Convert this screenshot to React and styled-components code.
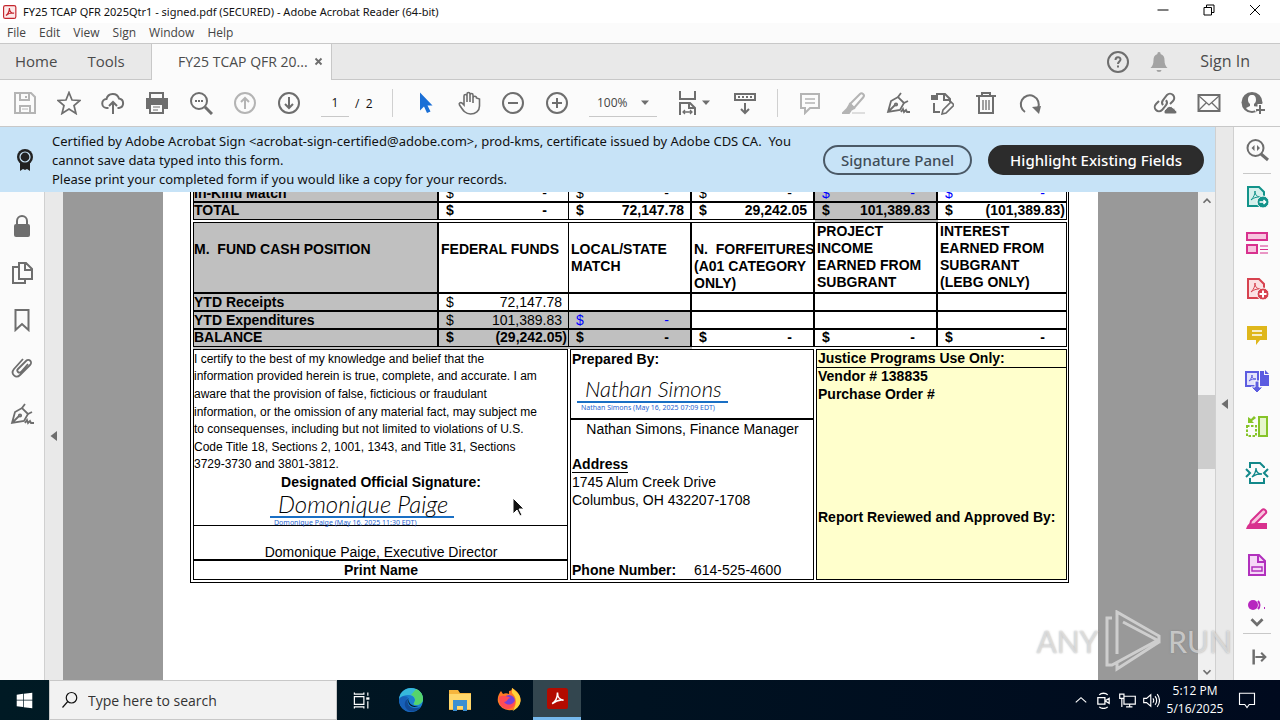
import React from 'react';
import styled, { createGlobalStyle } from 'styled-components';

const icons = {
  save: (
    <g stroke="#b4b4b4">
      <path d="M2 2h16l4 4v16H2z" />
      <path d="M7 3v6h9V3M7 21v-6h10v6M13 5v2" />
      <path d="M9 18h6" strokeWidth="1" />
    </g>
  ),
  star: <path d="M12 1.500l3 7.500 8 .500-6 5 2 8-7-4.500-7 4.500 2-8-6-5 8-.500z" strokeWidth="1.700" />,
  cloud: (
    <path d="M7.500 17H6a4.500 4.500 0 0 1-.5-9 6.500 6.500 0 0 1 12.500-.500A4.800 4.800 0 0 1 18 17h-1.500M12 23V11m-4 4l4-4 4 4" />
  ),
  print: (
    <g>
      <path d="M5 7V2h13v5" />
      <path d="M1 7h22v11h-4v-4H5v4H1z" fill="#6e6e6e" stroke="none" />
      <path d="M5 13h13v9H5z" fill="#fbfbfb" />
      <path d="M8 16h7M8 19h5" strokeWidth="1" />
    </g>
  ),
  find: (
    <g>
      <circle cx="10" cy="10" r="8" />
      <path d="M16 16l7 7" strokeWidth="3" />
      <path d="M6 10h2m1 0h2m1 0h2" />
    </g>
  ),
  up: (
    <g stroke="#b4b4b4">
      <circle cx="12" cy="12" r="10" />
      <path d="M12 18V7m-4 4l4-4 4 4" />
    </g>
  ),
  down: (
    <g>
      <circle cx="12" cy="12" r="10" />
      <path d="M12 6v11m-4-4l4 4 4-4" />
    </g>
  ),
  pointer: <path d="M7 1.500v18l4-4 3 6.500 3.500-1.500-3-6h5z" fill="#1a6fd6" stroke="none" />,
  hand: (
    <path
      d="M7 14V5a1.500 1.500 0 0 1 3 0v6V3a1.500 1.500 0 0 1 3 0v8V4a1.500 1.500 0 0 1 3 0v8V7a1.500 1.500 0 0 1 3.500 0l3 1v7c0 5-4 8-9 8s-7-3-11-9c-1-2 1-3 2.500-2z"
      strokeWidth="1.6"
    />
  ),
  minus: (
    <g>
      <circle cx="12" cy="12" r="10" />
      <path d="M7 12h10" />
    </g>
  ),
  plus: (
    <g>
      <circle cx="12" cy="12" r="10" />
      <path d="M7 12h10M12 7v10" />
    </g>
  ),
  fit: (
    <g>
      <path d="M4 0v8h15V0M4 24V12h10l5 5v7M13 12v5h6" />
      <path d="M7 21h9m-7-2l-2 2 2 2m5-4l2 2-2 2" strokeWidth="1.3" />
    </g>
  ),
  keyboard: (
    <g>
      <path d="M2 3h20v6H2z" />
      <path d="M5 6h2m2 0h2m2 0h2m2 0h2M12 12v10m-4-4l4 4 4-4" />
    </g>
  ),
  comment: (
    <g stroke="#b4b4b4">
      <path d="M3 3h18v14h-9l-5 5v-5H3z" />
      <path d="M7 8h10M7 12h10" strokeWidth="1.500" />
    </g>
  ),
  marker: (
    <g stroke="#b4b4b4">
      <path d="M8 13L18 3c2-2 5 1 3.500 3L12 17z" />
      <path d="M8 13l4 4-3 2-4-1zM5 18l-4 4h6l2-3z" fill="#b4b4b4" />
      <path d="M10 22h13" stroke="#dedede" />
    </g>
  ),
  pen: (
    <g strokeWidth="1.800">
      <path d="M2 21l3-11 7-4 6 6-4 7zM2 21l7-7" />
      <circle cx="10" cy="13.500" r="1.200" />
      <path d="M12 6l3-4m3 10l4-2M15 21l2-3 1 3 2-2 1 2h3" />
    </g>
  ),
  editPage: (
    <g>
      <path d="M6 3h9l5 5v3M14 3v6h6M4 12v9h6" />
      <path d="M1 4h7v5H1z" fill="#6e6e6e" stroke="none" />
      <path d="M12 23l1-4 8-8 3 3-8 8z" strokeWidth="1.600" />
    </g>
  ),
  trash: (
    <g>
      <path d="M2 5h20M8 5V2h8v3M5 6v16h14V6" />
      <path d="M9 9v10M12 9v10M15 9v10" strokeWidth="1.300" />
    </g>
  ),
  rotate: (
    <g>
      <path d="M7 21A9 9 0 1 1 20 17" />
      <path d="M14 16l9-1-2 8z" fill="#6e6e6e" stroke="none" />
    </g>
  ),
  link: (
    <g>
      <path d="M10 14a4 4 0 0 1 0-5l4-5a4 4 0 0 1 6 6l-3 3M13 9a4 4 0 0 1 0 5l-4 5a4 4 0 0 1-6-6l3-3" />
      <path
        d="M12 23a3 3 0 0 1 1-5 4 4 0 0 1 7-1c2 0 2 2 2 2 3 1 2 4 0 4z"
        fill="#6e6e6e"
        stroke="#fbfbfb"
        strokeWidth="1"
      />
    </g>
  ),
  mail: (
    <g>
      <path d="M1.500 4h21v16h-21z" />
      <path d="M2 5l10 9L22 5M2 19l7-7m13 7l-7-7" strokeWidth="1.300" />
    </g>
  ),
  person: (
    <g>
      <circle cx="11" cy="11.500" r="10.500" fill="#6e6e6e" stroke="none" />
      <path
        d="M11 4c-3 0-4 2-4 5 0 2 1 3 2 4v2l-4 2c1 2 4 3 6 3s5-1 6-3l-4-2v-2c1-1 2-2 2-4 0-3-1-5-4-5z"
        fill="#fbfbfb"
        stroke="none"
      />
      <path d="M19 13v10m-5-5h10" stroke="#fbfbfb" strokeWidth="5" />
      <path d="M19 14v9m-4-4h9" />
    </g>
  ),
  help: (
    <g>
      <circle cx="12" cy="12" r="10" />
      <path d="M9.500 10c0-3.500 5-3.500 5-.500 0 2-2.500 2-2.500 4.500M12 15.500v2" />
    </g>
  ),
  bell: (
    <path
      d="M12 2a1.500 1.500 0 0 1 1.500 2c3 1 4 3 4 6 0 4 1 6 3 8H3.500c2-2 3-4 3-8 0-3 1-5 4-6A1.500 1.500 0 0 1 12 2zM9.500 20h5a2.500 2 0 0 1-5 0z"
      fill="#a3a3a3"
      stroke="none"
    />
  ),
  medal: (
    <g>
      <path d="M7 14h10v9l-3-2-2 1-2-1-3 2z" fill="#222" stroke="none" />
      <circle cx="12" cy="9" r="8" fill="#222" stroke="none" />
      <circle cx="12" cy="9" r="5" stroke="#c7e3f7" strokeWidth="1.200" />
    </g>
  ),
  lock: (
    <g>
      <rect x="4" y="10" width="16" height="13" rx="2" fill="#6e6e6e" stroke="none" />
      <path d="M7 11V7a5 5 0 0 1 10 0v4" />
    </g>
  ),
  pages: <path d="M9 2h7l6 6v10H9zM15 2v7h7M9 6H3v16h12v-4" />,
  bookmark: <path d="M5.500 2h13v20L12 16l-6.500 6z" />,
  clip: (
    <path
      d="M18 9l-7 8c-2 2-5-1-3-3l8-8c3-3 7 1 4 4L10 20c-4 4-10-1-6-6l9-10"
      strokeWidth="1.800"
    />
  ),
  toolSearch: (
    <g>
      <circle cx="10.500" cy="10" r="8" />
      <path d="M16 16l7 6" strokeWidth="3" />
      <path d="M9.500 7v6l-3-3zM12 7v6l3-3z" fill="#6e6e6e" stroke="none" />
    </g>
  ),
  exportPdf: (
    <g stroke="#12938a">
      <path d="M3 2h11l5 5v14H3z" fill="#d5f0ec" />
      <path d="M6 15c3-3 4-6 4-9 0 5 3 6 6 6-4 0-6 0-10 3z" strokeWidth="1" />
      <circle cx="18" cy="17" r="6" fill="#12938a" stroke="#fbfbfb" strokeWidth="1" />
      <path d="M14.500 17h6m-2-2l2 2-2 2" stroke="#fff" strokeWidth="1.500" />
    </g>
  ),
  organize: (
    <g stroke="#d8318e">
      <path d="M2 2h20v7H2zM2 14h10v8H2z" fill="#f8c5df" />
      <path d="M15 15h8M15 18.500h8M15 22h8" strokeWidth="1" />
    </g>
  ),
  createPdf: (
    <g stroke="#d7424f">
      <path d="M3 2h11l5 5v14H3z" fill="#fbe1e3" />
      <path d="M6 15c3-3 4-6 4-9 0 5 3 6 6 6-4 0-6 0-10 3z" strokeWidth="1" />
      <circle cx="18" cy="17" r="6" fill="#d7424f" stroke="#fbfbfb" strokeWidth="1" />
      <path d="M14.500 17h7M18 13.500v7" stroke="#fff" />
    </g>
  ),
  note: (
    <g>
      <path d="M2 3h20v14h-7l-4 5v-5H2z" fill="#dfb71b" stroke="none" />
      <path d="M7 8h10M7 12h10" stroke="#fff" strokeWidth="1.500" />
    </g>
  ),
  combine: (
    <g stroke="#5c5ce0">
      <path d="M1 3h12v14H1z" fill="#e3e3fb" />
      <path d="M4 12c2-2 3-4 3-6 0 4 2 4 4 4-3 0-4 0-7 2z" strokeWidth="1" />
      <path d="M15 2h4v4h5v11h-9zM20 1l4 4h-4z" fill="#5c5ce0" stroke="none" />
      <path d="M10 12h4v6h4l-6 6-6-6h4z" fill="#5c5ce0" stroke="#fbfbfb" strokeWidth="1" />
    </g>
  ),
  compare: (
    <g stroke="#86c429">
      <path d="M14 2h8v19h-8z" fill="#e6f5cd" />
      <path d="M2 11h9v10H2z" strokeDasharray="2.500 1.500" />
      <path d="M3 2v6h6L7 6l4-3-2-2-3 3z" fill="#86c429" stroke="none" />
    </g>
  ),
  compress: (
    <g stroke="#12888a">
      <path d="M5 7V2h10l4 4v1M5 17v5h14v-5M1 8l4 4-4 4M23 8l-4 4 4 4" />
      <path d="M7 16c3-3 4-6 4-9 0 5 3 6 6 6-4 0-6 0-10 3z" strokeWidth="1.300" />
    </g>
  ),
  redact: (
    <g stroke="#d8318e">
      <path d="M1 22c2-6 4-6 7-6h14v6z" fill="#d8318e" stroke="none" />
      <path d="M6 14L17 3c2-2 5 1 4 3L10 17l-5 1z" fill="#f8c5df" />
    </g>
  ),
  form: (
    <g stroke="#b130bd">
      <path d="M4 2h10l6 6v14H4z" fill="#f5d8f7" />
      <path d="M13 2v7h7" />
      <path d="M7 14h10v4H7z" strokeWidth="1.500" />
    </g>
  ),
  protect: (
    <g>
      <circle cx="8" cy="6" r="5" fill="#b726bf" stroke="none" />
      <path d="M13 2a6 6 0 0 1 0 8M19 9h1" stroke="#b726bf" />
    </g>
  ),
  chevronDown: <path d="M6 9l6 6 6-6" strokeWidth="3" />,
  chevronUp: <path d="M6 15l6-6 6 6" strokeWidth="3" />,
  collapse: (
    <g>
      <path d="M8 3v18" strokeWidth="3" />
      <path d="M10 12h11m-4-5l5 5-5 5" strokeWidth="2.500" />
    </g>
  ),
  caret: <path d="M4 7h16l-8 9z" fill="#6e6e6e" stroke="none" />,
  triangleLeft: <path d="M18 2v20L5 12z" fill="#6e6e6e" stroke="none" />,
  cross: <path d="M4 4l16 16M20 4L4 20" strokeWidth="5" />,
  minimise: <path d="M1 12h22" stroke="#000" />,
  restore: <path d="M2 7h15v15H2zM7 7V2h15v15h-5" stroke="#000" />,
  close: <path d="M2 2l20 20M22 2L2 22" stroke="#000" />,
  acrobat: (
    <g>
      <rect x="1" y="1" width="21" height="22" rx="3" fill="#fdeaea" stroke="#c4262e" strokeWidth="2" />
      <path d="M5 18c4-3 6-8 6-13 0 7 4 9 8 9-5-1-9 0-14 4z" stroke="#c4262e" />
    </g>
  ),
  acrobatTile: (
    <g>
      <rect width="24" height="24" rx="3" fill="#b30b00" stroke="none" />
      <path d="M6 18c4-3 6-8 6-13 0 6 2 8 7 9-5-1-8 0-13 4z" stroke="#fff" strokeWidth="1.800" />
    </g>
  ),
  windows: (
    <path d="M1 4l9-1.500V11H1zM11 2.300L23 1v10H11zM1 12h9v9L1 20zM11 12h12v11l-12-1.500z" fill="#fff" stroke="none" />
  ),
  glass: (
    <g stroke="#111" strokeWidth="1.600">
      <circle cx="14" cy="9" r="7" />
      <path d="M9 14l-7 8" />
    </g>
  ),
  taskView: (
    <g stroke="#fff" strokeWidth="1.500">
      <path d="M3 7h12v10H3zM3 2v2h12V2M3 22v-2h12v2M20 2v4M20 13v9" />
      <path d="M18 8h4v3h-4z" fill="#fff" stroke="none" />
    </g>
  ),
  edge: (
    <g stroke="none">
      <circle cx="12" cy="12" r="12" fill="#1b7fd0" />
      <path d="M0 11C1 4 6 0 12 0c8 0 12 6 12 11 0 4-4 6-7 6-2 0-3-1-2-2 3-4-1-8-5-8-5 0-9 2-10 4z" fill="#36b8dc" />
      <path d="M17 1c5 2 7 6 7 10 0 4-4 6-7 6-2 0-3-1-2-2 2-3 1-7-3-8z" fill="#55d46c" />
      <path d="M9 9c-5 5-1 13 6 15C7 25 1 20 0 13c0-4 5-6 9-4z" fill="#1760b8" />
      <path d="M10 10c-4 5 1 13 12 9-4 6-14 6-16-1-1-4 1-7 4-8z" fill="#124a96" />
      <path d="M10 11c-1 4 3 8 9 7-5 3-12-2-9-7z" fill="#001822" />
    </g>
  ),
  folder: (
    <g stroke="none">
      <path d="M1 2h9l2 3h11v17H1z" fill="#f6b53d" />
      <path d="M1 6h22v15H1z" fill="#ffd76b" />
      <path d="M5 12h14v11h-4v-5H9v5H5z" fill="#3b8fd0" />
    </g>
  ),
  firefox: (
    <g stroke="none">
      <path d="M12 3c2 0 3-1 3-3 5 3 9 7 8.500 13A11.500 11 0 0 1 1 14C0 9 2 6 4 3l2 3c2-1 4-1 6 0z" fill="#ff7a25" />
      <path d="M15 0c5 4 9 7 8.500 13-.500 5-4 8-8 10 5-7 4-14-.500-18z" fill="#ffd43a" />
      <circle cx="12" cy="13" r="6" fill="#7542d8" />
      <path d="M2 9c5-3 9 0 12 1-4 0-3 4-7 4 4 5 10 2 11-2 2 9-11 13-15 4z" fill="#ff4b55" />
    </g>
  ),
  trayUp: <path d="M3 16l9-8 9 8" stroke="#fff" />,
  camera: (
    <g stroke="#fff" strokeWidth="1.800">
      <path d="M4 8h10v9H4zM15 12l5-3v7l-5-3M6 4c3-3 9-3 12 0M6 21c3 3 9 3 12 0" />
    </g>
  ),
  network: <path d="M7 6h16v11H7zM15 17v4M10 21h9M1 3h6v6H1zM4 9v12" stroke="#fff" strokeWidth="1.700" />,
  volume: (
    <path
      d="M1 9h4l6-5v16l-6-5H1zM14 9a5 5 0 0 1 0 6M17 6a9 9 0 0 1 0 12M20 3a14 14 0 0 1 0 18"
      stroke="#fff"
      strokeWidth="1.600"
    />
  ),
  notice: <path d="M2 3h20v15h-7l-3 4-3-4H2z" stroke="#fff" strokeWidth="1.500" />,
};

const Icon = ({ name, size = 24 }) => (
  <svg
    width={size}
    height={size}
    viewBox="0 0 24 24"
    fill="none"
    stroke="#6e6e6e"
    strokeWidth="2"
    aria-hidden="true"
  >
    {icons[name]}
  </svg>
);

const menuItems = ['File', 'Edit', 'View', 'Sign', 'Window', 'Help'];
const fileTools = ['save', 'star', 'cloud', 'print', 'find', 'up', 'down'];
const viewTools = ['pointer', 'hand', 'minus', 'plus'];
const markTools = ['comment', 'marker', 'pen', 'editPage', 'trash', 'rotate'];
const shareTools = ['link', 'mail', 'person'];
const leftTools = ['lock', 'pages', 'bookmark', 'clip', 'pen'];
const rightTools = [
  'exportPdf',
  'organize',
  'createPdf',
  'note',
  'combine',
  'compare',
  'compress',
  'redact',
  'form',
];
const taskApps = ['edge', 'folder', 'firefox'];

const certifyLines = [
  'I certify to the best of my knowledge and belief that the',
  'information provided herein is true, complete, and accurate. I am',
  'aware that the provision of false, ficticious or fraudulant',
  'information, or the omission of any material fact, may subject me',
  'to consequenses, including but not limited to violations of U.S.',
  'Code Title 18, Sections 2, 1001, 1343, and Title 31, Sections',
  '3729-3730 and 3801-3812.',
];

const amountInset = (value) => {
  if (value === '-') return 21;
  return value.startsWith('(') ? 1 : 6;
};

const Amount = ({ value, blue }) => (
  <AmountRow $inset={amountInset(value)} $blue={blue}>
    <span>$</span>
    <span>{value}</span>
  </AmountRow>
);

const FundTable = () => (
  <Funds>
    <colgroup>
      <Col $width={246} />
      <Col $width={130} />
      <Col $width={123} />
      <Col $width={123} />
      <Col $width={123} />
      <Col $width={129} />
    </colgroup>
    <tbody>
      <tr>
        <RowHead>In-Kind Match</RowHead>
        <Cell $thin><Amount value='-' /></Cell>
        <Cell><Amount value='-' /></Cell>
        <Cell><Amount value='-' /></Cell>
        <Cell $gray><Amount value='-' blue /></Cell>
        <Cell $thin><Amount value='-' blue /></Cell>
      </tr>
      <TotalRow>
        <RowHead $last>TOTAL</RowHead>
        <Cell $thin $last><Amount value='-' /></Cell>
        <Cell $last><Amount value='72,147.78' /></Cell>
        <Cell $last><Amount value='29,242.05' /></Cell>
        <Cell $gray $last><Amount value='101,389.83' /></Cell>
        <Cell $thin $last><Amount value='(101,389.83)' /></Cell>
      </TotalRow>
      <tr>
        <Gap colSpan={4} />
        <Gap $gray />
        <Gap />
      </tr>
      <tr>
        <HeadCell $gray $down>M.&nbsp; FUND CASH POSITION</HeadCell>
        <HeadCell $thin $down>FEDERAL FUNDS</HeadCell>
        <HeadCell $down>LOCAL/STATE<br />MATCH</HeadCell>
        <HeadCell $down>N.&nbsp; FORFEITURES<br />(A01 CATEGORY<br />ONLY)</HeadCell>
        <HeadCell>PROJECT<br />INCOME<br />EARNED FROM<br />SUBGRANT</HeadCell>
        <HeadCell $thin>INTEREST<br />EARNED FROM<br />SUBGRANT<br />(LEBG ONLY)</HeadCell>
      </tr>
      <tr>
        <RowHead>YTD Receipts</RowHead>
        <Cell $thin><Amount value='72,147.78' /></Cell>
        <Cell />
        <Cell />
        <Cell />
        <Cell $thin />
      </tr>
      <tr>
        <RowHead>YTD Expenditures</RowHead>
        <Cell $thin $gray><Amount value='101,389.83' /></Cell>
        <Cell $gray><Amount value='-' blue /></Cell>
        <Cell />
        <Cell />
        <Cell $thin />
      </tr>
      <TotalRow>
        <RowHead $last>BALANCE</RowHead>
        <Cell $thin $gray $last><Amount value='(29,242.05)' /></Cell>
        <Cell $gray $last><Amount value='-' /></Cell>
        <Cell $last><Amount value='-' /></Cell>
        <Cell $last><Amount value='-' /></Cell>
        <Cell $thin $last><Amount value='-' /></Cell>
      </TotalRow>
      <tr>
        <Gap $gray colSpan={3} />
        <Gap colSpan={3} />
      </tr>
    </tbody>
  </Funds>
);

const SignOff = () => (
  <Blocks>
    <Block>
      {certifyLines.map((line) => (
        <CertifyLine key={line}>{line}</CertifyLine>
      ))}
      <Line $bold $center>Designated Official Signature:</Line>
      <SignArea $row='9 / 11' $indent={76} $line={1}>
        <SignName $width={184} $size={24}>Domonique Paige</SignName>
        <SignStamp>Domonique Paige (May 16, 2025 11:30 EDT)</SignStamp>
      </SignArea>
      <Line $row='12' $center $rule={2}>Domonique Paige, Executive Director</Line>
      <Line $row='13' $bold $center>Print Name</Line>
    </Block>
    <Block>
      <Line $bold>Prepared By:</Line>
      <SignArea $row='2 / 5' $indent={6} $top={8} $line={2}>
        <SignName $width={151} $size={22}>Nathan Simons</SignName>
        <SignStamp>Nathan Simons (May 16, 2025 07:09 EDT)</SignStamp>
      </SignArea>
      <Line $row='5' $center>Nathan Simons, Finance Manager</Line>
      <Line $row='7' $bold><Underlined>Address</Underlined></Line>
      <Line $row='8'>1745 Alum Creek Drive</Line>
      <Line $row='9'>Columbus, OH 432207-1708</Line>
      <Line $row='13'>
        <PhoneLabel>Phone Number:</PhoneLabel>
        614-525-4600
      </Line>
    </Block>
    <Block $yellow>
      <Line $bold $rule={1}>Justice Programs Use Only:</Line>
      <Line $bold>Vendor # 138835</Line>
      <Line $bold>Purchase Order #</Line>
      <Line $row='10' $bold>Report Reviewed and Approved By:</Line>
    </Block>
  </Blocks>
);

const ToolGroup = ({ names }) =>
  names.map((name) => (
    <ToolButton key={name} aria-label={name}>
      <Icon name={name} />
    </ToolButton>
  ));

const App = () => {
  return (
    <Window>
      <GlobalStyle />
      <TitleBar>
        <Icon name='acrobat' size={14} />
        <Title>FY25 TCAP QFR 2025Qtr1 - signed.pdf (SECURED) - Adobe Acrobat Reader (64-bit)</Title>
        <WindowButton aria-label='Minimize'><Icon name='minimise' size={12} /></WindowButton>
        <WindowButton aria-label='Restore'><Icon name='restore' size={12} /></WindowButton>
        <WindowButton aria-label='Close'><Icon name='close' size={12} /></WindowButton>
      </TitleBar>
      <MenuBar>
        {menuItems.map((item) => (
          <MenuButton key={item}>{item}</MenuButton>
        ))}
      </MenuBar>
      <TabBar>
        <HomeTabs>
          <TextButton>Home</TextButton>
          <TextButton>Tools</TextButton>
        </HomeTabs>
        <FileTab>
          <TabTitle>FY25 TCAP QFR 20...</TabTitle>
          <PlainButton aria-label='Close tab'><Icon name='cross' size={9} /></PlainButton>
        </FileTab>
        <Account>
          <PlainButton aria-label='Help'><Icon name='help' /></PlainButton>
          <PlainButton aria-label='Notifications'><Icon name='bell' /></PlainButton>
          <TextButton $large>Sign In</TextButton>
        </Account>
      </TabBar>
      <Toolbar>
        <ToolGroup names={fileTools} />
        <PageInput aria-label='Page' defaultValue='1' />
        <PageCount>/&nbsp; 2</PageCount>
        <Divider />
        <ToolGroup names={viewTools} />
        <ZoomBox>
          <ZoomSelect aria-label='Zoom' defaultValue='100%'>
            <option>100%</option>
          </ZoomSelect>
          <Icon name='caret' size={12} />
        </ZoomBox>
        <FitButton aria-label='Fit width'>
          <Icon name='fit' />
          <Icon name='caret' size={12} />
        </FitButton>
        <ToolGroup names={['keyboard']} />
        <Divider />
        <ToolGroup names={markTools} />
        <Spacer />
        <ToolGroup names={shareTools} />
      </Toolbar>
      <Body>
        <Main>
          <Banner>
            <Icon name='medal' />
            <BannerText>
              Certified by Adobe Acrobat Sign &lt;acrobat-sign-certified@adobe.com&gt;, prod-kms,
              certificate issued by Adobe CDS CA.&nbsp; You
              <br />
              cannot save data typed into this form.
              <br />
              Please print your completed form if you would like a copy for your records.
            </BannerText>
            <PillButton>Signature Panel</PillButton>
            <PillButton $dark>Highlight Existing Fields</PillButton>
          </Banner>
          <Viewer>
            <LeftRail>
              {leftTools.map((name) => (
                <RailButton key={name} aria-label={name} $tall><Icon name={name} /></RailButton>
              ))}
            </LeftRail>
            <Strip $left>
              <Icon name='triangleLeft' size={12} />
            </Strip>
            <Canvas>
              <Page>
                <Sheet>
                  <FundTable />
                  <SignOff />
                </Sheet>
              </Page>
            </Canvas>
            <ScrollBar>
              <ScrollArrow aria-label='Scroll up'><Icon name='chevronUp' size={14} /></ScrollArrow>
              <Track $grow={186} />
              <Track $grow={74} $thumb />
              <Track $grow={194} />
              <ScrollArrow aria-label='Scroll down'><Icon name='chevronDown' size={14} /></ScrollArrow>
            </ScrollBar>
          </Viewer>
        </Main>
        <Strip>
          <Icon name='triangleLeft' size={12} />
        </Strip>
        <RightRail>
          <RailButton aria-label='Search tools'><Icon name='toolSearch' /></RailButton>
          <RailRule />
          {rightTools.map((name) => (
            <RailButton key={name} aria-label={name}><Icon name={name} /></RailButton>
          ))}
          <ClippedTool><Icon name='protect' /></ClippedTool>
          <MoreButton aria-label='More tools'><Icon name='chevronDown' size={22} /></MoreButton>
          <RailRule />
          <RailButton aria-label='Collapse'><Icon name='collapse' size={20} /></RailButton>
        </RightRail>
      </Body>
      <TaskBar>
        <TaskButton aria-label='Start'><Icon name='windows' size={17} /></TaskButton>
        <SearchBox>
          <Icon name='glass' size={18} />
          <SearchInput aria-label='Search' placeholder='Type here to search' />
        </SearchBox>
        <TaskButton aria-label='Task view'><Icon name='taskView' size={19} /></TaskButton>
        {taskApps.map((name) => (
          <TaskButton key={name} aria-label={name}><Icon name={name} /></TaskButton>
        ))}
        <TaskButton aria-label='Acrobat' $active><Icon name='acrobatTile' size={21} /></TaskButton>
        <Spacer />
        <Tray>
          <Icon name='trayUp' size={14} />
          <Icon name='camera' size={17} />
          <Icon name='network' size={17} />
          <Icon name='volume' size={17} />
        </Tray>
        <Clock>
          <span>5:12 PM</span>
          <span>5/16/2025</span>
        </Clock>
        <NoticeButton aria-label='Action center'><Icon name='notice' size={18} /></NoticeButton>
      </TaskBar>
      <Watermark>
        ANY
        <svg width='56' height='62' viewBox='0 0 56 62' fill='none' stroke='currentColor' strokeWidth='3'>
          <path d='M7 8H2v47h5l46-25M12 44V2l42 24v5L18 12M54 32L12 59v-6' />
        </svg>
        RUN
      </Watermark>
      <Cursor width='12' height='20' viewBox='0 0 12 20'>
        <path d='M1 1v16l4-4 3 6 2-1-3-6h5z' fill='#111' stroke='#fff' strokeWidth='1' />
      </Cursor>
    </Window>
  );
};

export default App;

const GlobalStyle = createGlobalStyle`
  * {
    box-sizing: border-box;
  }
  body {
    margin: 0;
    font-family: 'Open Sans', 'Noto Sans', sans-serif;
    font-size: 12px;
    color: #111;
  }
  button, input, select {
    font: inherit;
    color: inherit;
    border: none;
    background: none;
    padding: 0;
    margin: 0;
    border-radius: 0;
  }
  svg {
    display: block;
    flex: none;
  }
`;

const Window = styled.div`
  position: relative;
  display: flex;
  flex-direction: column;
  height: 100vh;
  overflow: hidden;
  background: #fbfbfb;
`;

const TitleBar = styled.header`
  display: flex;
  align-items: center;
  height: 23px;
  padding: 0 2px 0 3px;
  background: #fff;
`;

const Title = styled.span`
  flex: 1;
  margin-left: 6px;
  font-family: 'Noto Sans', sans-serif;
  font-size: 11px;
  white-space: nowrap;
`;

const PlainButton = styled.button`
  display: flex;
  align-items: center;
  justify-content: center;
`;

const WindowButton = styled(PlainButton)`
  width: 46px;
  height: 20px;
  align-self: flex-start;
`;

const MenuBar = styled.nav`
  display: flex;
  align-items: center;
  gap: 13px;
  height: 21px;
  padding: 0 7px 2px;
  border-bottom: 1px solid #c8c8c8;
`;

const MenuButton = styled.button`
  color: #444;
`;

const TabBar = styled.div`
  display: flex;
  height: 36px;
  background: #e9e9e9;
  border-bottom: 1px solid #c8c8c8;
`;

const HomeTabs = styled.div`
  display: flex;
  align-items: center;
  gap: 30px;
  width: 152px;
  padding-left: 15px;
  border-right: 1px solid #c8c8c8;
`;

const TextButton = styled.button`
  font-size: ${({ $large }) => ($large ? 16 : 15)}px;
  line-height: 20px;
  padding-bottom: 2px;
  color: #4b4b4b;
`;

const FileTab = styled.div`
  display: flex;
  align-items: center;
  justify-content: space-between;
  width: 180px;
  height: 36px;
  padding: 0 8px 2px 26px;
  background: #fbfbfb;
  border-right: 1px solid #c8c8c8;
`;

const TabTitle = styled.span`
  font-size: 14px;
  color: #4b4b4b;
`;

const Account = styled.div`
  display: flex;
  flex: 1;
  align-items: center;
  justify-content: flex-end;
  gap: 17px;
  padding-right: 30px;
  ${TextButton} {
    margin-left: 12px;
  }
`;

const Toolbar = styled.div`
  display: flex;
  align-items: center;
  height: 47px;
  padding: 0 5px 0 3px;
  border-bottom: 1px solid #c8c8c8;
`;

const ToolButton = styled(PlainButton)`
  width: 44px;
  height: 44px;
`;

const FitButton = styled(PlainButton)`
  width: 66px;
  height: 44px;
  padding-left: 8px;
`;

const PageInput = styled.input`
  width: 28px;
  height: 28px;
  margin-left: 10px;
  border-bottom: 1px solid #c8c8c8;
  text-align: center;
`;

const PageCount = styled.span`
  width: 33px;
  padding-left: 6px;
`;

const Divider = styled.div`
  width: 1px;
  height: 28px;
  margin: 0 10px;
  background: #d0d0d0;
`;

const ZoomBox = styled.div`
  display: flex;
  align-items: center;
  width: 68px;
  height: 28px;
  margin-left: 10px;
  border-bottom: 1px solid #c8c8c8;
`;

const ZoomSelect = styled.select`
  width: 50px;
  padding-left: 8px;
  appearance: none;
  color: #444;
`;

const Spacer = styled.div`
  flex: 1;
`;

const Body = styled.div`
  display: flex;
  flex: 1;
  min-height: 0;
`;

const Main = styled.main`
  display: flex;
  flex: 1;
  flex-direction: column;
  min-width: 0;
`;

const Banner = styled.div`
  display: flex;
  align-items: center;
  height: 65px;
  padding: 0 11px 0 13px;
  background: #c7e3f7;
`;

const BannerText = styled.p`
  flex: 1;
  margin: 0 0 0 15px;
  padding-top: 2px;
  font-family: 'Noto Sans', sans-serif;
  font-size: 13px;
  line-height: 19px;
  white-space: nowrap;
`;

const PillButton = styled.button`
  height: 30px;
  margin-left: 16px;
  padding: 0 ${({ $dark }) => ($dark ? 20 : 16)}px;
  border: 2px solid ${({ $dark }) => ($dark ? '#2c2c2c' : '#4b5966')};
  border-radius: 15px;
  background: ${({ $dark }) => ($dark ? '#2c2c2c' : 'transparent')};
  color: ${({ $dark }) => ($dark ? '#fff' : '#3f4c58')};
  font-family: 'Noto Sans', sans-serif;
  font-size: 15px;
  font-weight: 500;
  line-height: 20px;
  white-space: nowrap;
`;

const Viewer = styled.div`
  display: flex;
  flex: 1;
  min-height: 0;
`;

const LeftRail = styled.aside`
  width: 44px;
  padding-top: 10px;
`;

const RailButton = styled(PlainButton)`
  width: 100%;
  height: ${({ $tall }) => ($tall ? 47 : 46)}px;
`;

const Strip = styled.div`
  display: flex;
  align-items: center;
  justify-content: center;
  width: 19px;
  background: #e9e9e9;
  border: solid #d0d0d0;
  border-width: ${({ $left }) => ($left ? '0 0 0 1px' : '0 1px')};
`;

const Canvas = styled.div`
  display: flex;
  flex: 1;
  justify-content: center;
  overflow: hidden;
  background: #999;
`;

const Page = styled.article`
  width: 935px;
  margin-top: -7px;
  padding: 0 27px;
  background: #fff;
  font-family: 'Liberation Sans', Arial, sans-serif;
  font-size: 14px;
  color: #000;
`;

const Sheet = styled.div`
  width: 879px;
  padding: 0 1px 2px 2px;
  border: 1px solid #000;
  border-top: none;
`;

const Funds = styled.table`
  width: 874px;
  table-layout: fixed;
  border-collapse: separate;
  border-spacing: 0;
`;

const Col = styled.col`
  width: ${({ $width }) => $width}px;
`;

const Cell = styled.td`
  height: ${({ $last }) => ($last ? 17 : 18)}px;
  padding: 0;
  border: solid #000;
  border-width: 0 ${({ $thin }) => ($thin ? 1 : 2)}px ${({ $last }) => ($last ? 1 : 2)}px 0;
  background: ${({ $gray }) => ($gray ? '#c0c0c0' : '#fff')};
  line-height: ${({ $last }) => ($last ? 14 : 16)}px;
  vertical-align: top;
  white-space: nowrap;
`;

const RowHead = styled.th`
  height: ${({ $last }) => ($last ? 17 : 18)}px;
  padding: 0;
  border: solid #000;
  border-width: 0 2px ${({ $last }) => ($last ? 1 : 2)}px 1px;
  background: #c0c0c0;
  line-height: ${({ $last }) => ($last ? 14 : 16)}px;
  text-align: left;
  vertical-align: top;
`;

const HeadCell = styled.th`
  height: 72px;
  padding: ${({ $down }) => ($down ? 18 : 0)}px 0 0 2px;
  border: solid #000;
  border-width: 1px ${({ $thin }) => ($thin ? 1 : 2)}px 2px 0;
  background: ${({ $gray }) => ($gray ? '#c0c0c0' : '#fff')};
  line-height: 17px;
  text-align: left;
  vertical-align: top;
  white-space: nowrap;
  &:first-child {
    padding-left: 0;
    border-left-width: 1px;
  }
`;

const Gap = styled.td`
  height: 2px;
  padding: 0;
  background: ${({ $gray }) => ($gray ? '#c0c0c0' : '#fff')};
`;

const TotalRow = styled.tr`
  font-weight: 700;
`;

const AmountRow = styled.div`
  display: flex;
  justify-content: space-between;
  padding: 0 ${({ $inset }) => $inset}px 0 7px;
  color: ${({ $blue }) => ($blue ? '#00f' : '#000')};
`;

const Blocks = styled.div`
  display: grid;
  grid-template-columns: 375px 244px 251px;
  gap: 2px;
`;

const Block = styled.section`
  display: grid;
  grid-template-rows: repeat(13, minmax(0, 1fr));
  height: 231px;
  border: 1px solid #000;
  background: ${({ $yellow }) => ($yellow ? '#ffffcc' : '#fff')};
`;

const Line = styled.div`
  display: flex;
  align-items: center;
  justify-content: ${({ $center }) => ($center ? 'center' : 'flex-start')};
  grid-row: ${({ $row = 'auto' }) => $row};
  padding-left: 1px;
  border-bottom: ${({ $rule = 0 }) => $rule}px solid #000;
  font-weight: ${({ $bold }) => ($bold ? 700 : 400)};
  line-height: 16px;
  white-space: nowrap;
`;

const CertifyLine = styled(Line)`
  padding-left: 0;
  font-size: 12px;
`;

const Underlined = styled.span`
  border-bottom: 1px solid #000;
`;

const PhoneLabel = styled.b`
  width: 122px;
`;

const SignArea = styled.div`
  grid-row: ${({ $row }) => $row};
  padding: ${({ $top = 0 }) => $top}px 0 0 ${({ $indent }) => $indent}px;
  border-bottom: ${({ $line }) => $line}px solid #000;
`;

const SignName = styled.div`
  width: ${({ $width }) => $width}px;
  padding-left: 8px;
  border-bottom: 2px solid #1a6fc4;
  font-family: Lato, sans-serif;
  font-size: ${({ $size }) => $size}px;
  font-style: italic;
  font-weight: 300;
  line-height: 25px;
  white-space: nowrap;
`;

const SignStamp = styled.div`
  padding-left: 4px;
  color: #2a66d0;
  font-family: 'Noto Sans', sans-serif;
  font-size: 7px;
  line-height: 10px;
`;

const ScrollBar = styled.div`
  display: flex;
  flex-direction: column;
  width: 17px;
  background: #f0f0f0;
`;

const ScrollArrow = styled(PlainButton)`
  height: 17px;
`;

const Track = styled.div`
  flex: ${({ $grow }) => $grow};
  background: ${({ $thumb }) => ($thumb ? '#cdcdcd' : 'transparent')};
`;

const RightRail = styled.aside`
  display: flex;
  flex-direction: column;
  align-items: center;
  width: 46px;
`;

const RailRule = styled.div`
  width: 28px;
  height: 1px;
  background: #c8c8c8;
`;

const ClippedTool = styled.div`
  display: flex;
  align-items: flex-start;
  height: 22px;
  padding-top: 11px;
  overflow: hidden;
`;

const MoreButton = styled(PlainButton)`
  flex: 1;
  min-height: 0;
`;

const TaskBar = styled.footer`
  display: flex;
  height: 40px;
  background: linear-gradient(90deg, #001a24, #000a1e);
  color: #fff;
`;

const TaskButton = styled(PlainButton)`
  width: ${({ $active }) => ($active ? 48 : 49)}px;
  border-bottom: ${({ $active }) => ($active ? '3px solid #76b9ed' : 'none')};
  background: ${({ $active }) => ($active ? '#33464f' : 'transparent')};
`;

const SearchBox = styled.label`
  display: flex;
  align-items: center;
  gap: 9px;
  width: 288px;
  padding-left: 11px;
  border: 1px solid #c8c8c8;
  background: #f2f2f2;
`;

const SearchInput = styled.input`
  flex: 1;
  outline: none;
  font-size: 14px;
  &::placeholder {
    color: #333;
    opacity: 1;
  }
`;

const Tray = styled.div`
  display: flex;
  align-items: center;
  gap: 7px;
`;

const Clock = styled.div`
  display: flex;
  flex-direction: column;
  align-items: center;
  justify-content: center;
  width: 70px;
  line-height: 18px;
`;

const NoticeButton = styled(PlainButton)`
  width: 34px;
  margin-right: 16px;
`;

const Watermark = styled.div`
  position: absolute;
  right: 48px;
  bottom: 48px;
  display: flex;
  align-items: center;
  gap: 7px;
  color: rgba(235, 235, 235, 0.65);
  font-family: Lato, sans-serif;
  font-size: 30px;
  text-shadow: 0 0 2px rgba(120, 120, 120, 0.6);
  pointer-events: none;
`;

const Cursor = styled.svg`
  position: absolute;
  left: 512px;
  top: 497px;
`;
